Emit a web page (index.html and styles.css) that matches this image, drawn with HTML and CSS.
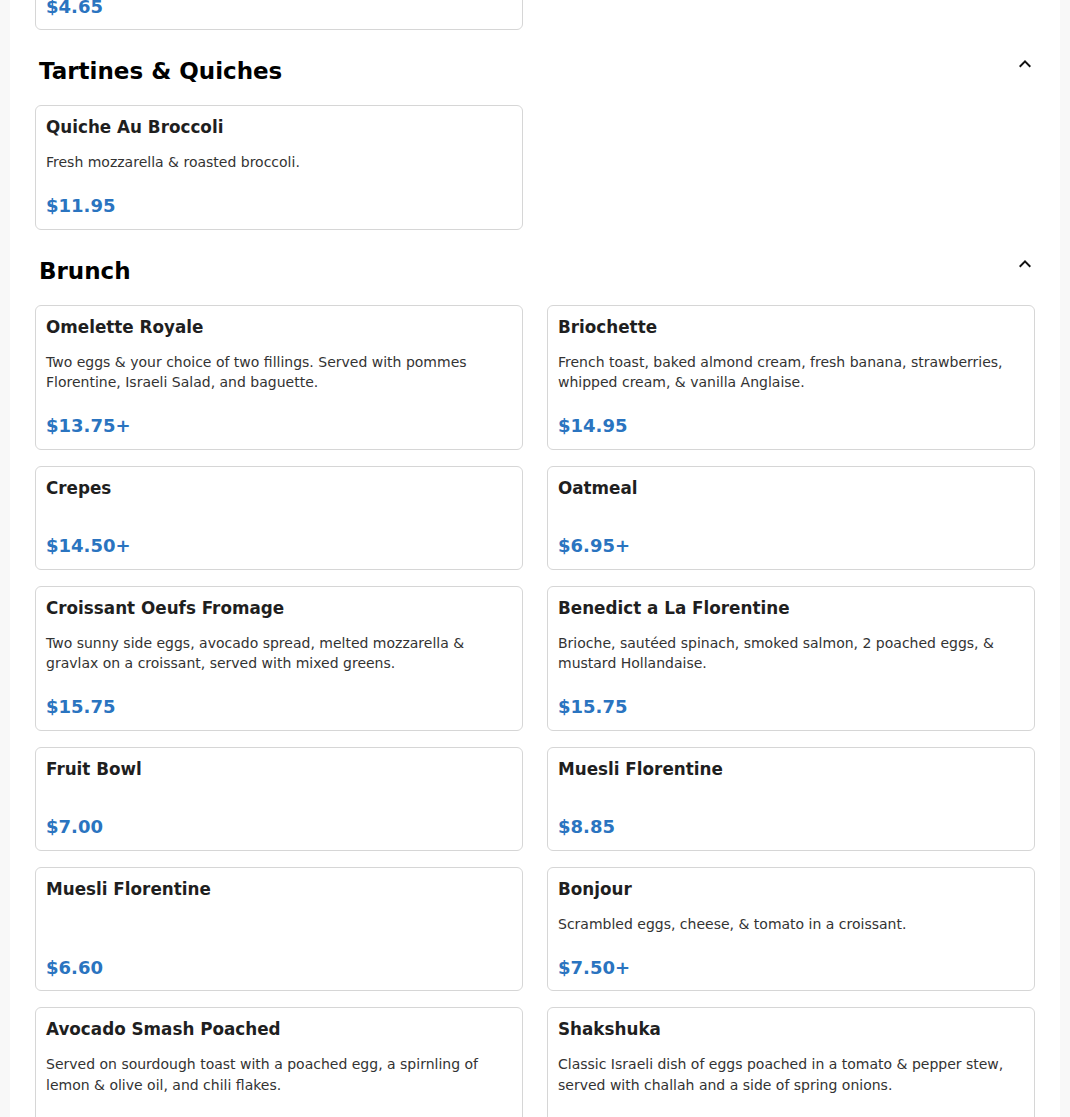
FILE: index.html
```html
<!DOCTYPE html>
<html lang="en">
<head>
<meta charset="utf-8">
<title>Menu</title>
<link rel="stylesheet" href="styles.css">
</head>
<body>
<main class="menu">
  <div class="grid grid-top">
    <div class="card card-cut">
      <div class="price">$4.65</div>
    </div>
  </div>

  <section class="section">
    <div class="section-head">
      <h2 class="section-title">Tartines &amp; Quiches</h2>
      <button class="toggle" aria-label="Collapse">
        <svg viewBox="0 0 24 24" width="24" height="24"><path d="M12 8l-6 6 1.41 1.41L12 10.83l4.59 4.58L18 14z"/></svg>
      </button>
    </div>
    <div class="grid">
      <div class="card">
        <h3 class="item-name">Quiche Au Broccoli</h3>
        <p class="item-desc">Fresh mozzarella &amp; roasted broccoli.</p>
        <div class="price">$11.95</div>
      </div>
    </div>
  </section>

  <section class="section">
    <div class="section-head">
      <h2 class="section-title">Brunch</h2>
      <button class="toggle" aria-label="Collapse">
        <svg viewBox="0 0 24 24" width="24" height="24"><path d="M12 8l-6 6 1.41 1.41L12 10.83l4.59 4.58L18 14z"/></svg>
      </button>
    </div>
    <div class="grid">
      <div class="card">
        <h3 class="item-name">Omelette Royale</h3>
        <p class="item-desc">Two eggs &amp; your choice of two fillings. Served with pommes Florentine, Israeli Salad, and baguette.</p>
        <div class="price">$13.75+</div>
      </div>
      <div class="card">
        <h3 class="item-name">Briochette</h3>
        <p class="item-desc">French toast, baked almond cream, fresh banana, strawberries, whipped cream, &amp; vanilla Anglaise.</p>
        <div class="price">$14.95</div>
      </div>
      <div class="card">
        <h3 class="item-name">Crepes</h3>
        <p class="item-desc"></p>
        <div class="price">$14.50+</div>
      </div>
      <div class="card">
        <h3 class="item-name">Oatmeal</h3>
        <p class="item-desc"></p>
        <div class="price">$6.95+</div>
      </div>
      <div class="card">
        <h3 class="item-name">Croissant Oeufs Fromage</h3>
        <p class="item-desc">Two sunny side eggs, avocado spread, melted mozzarella &amp; gravlax on a croissant, served with mixed greens.</p>
        <div class="price">$15.75</div>
      </div>
      <div class="card">
        <h3 class="item-name">Benedict a La Florentine</h3>
        <p class="item-desc">Brioche, sautéed spinach, smoked salmon, 2 poached eggs, &amp; mustard Hollandaise.</p>
        <div class="price">$15.75</div>
      </div>
      <div class="card">
        <h3 class="item-name">Fruit Bowl</h3>
        <p class="item-desc"></p>
        <div class="price">$7.00</div>
      </div>
      <div class="card">
        <h3 class="item-name">Muesli Florentine</h3>
        <p class="item-desc"></p>
        <div class="price">$8.85</div>
      </div>
      <div class="card">
        <h3 class="item-name">Muesli Florentine</h3>
        <p class="item-desc">&nbsp;</p>
        <div class="price">$6.60</div>
      </div>
      <div class="card">
        <h3 class="item-name">Bonjour</h3>
        <p class="item-desc">Scrambled eggs, cheese, &amp; tomato in a croissant.</p>
        <div class="price">$7.50+</div>
      </div>
      <div class="card">
        <h3 class="item-name">Avocado Smash Poached</h3>
        <p class="item-desc">Served on sourdough toast with a poached egg, a spirnling of lemon &amp; olive oil, and chili flakes.</p>
        <div class="price">$12.50</div>
      </div>
      <div class="card">
        <h3 class="item-name">Shakshuka</h3>
        <p class="item-desc">Classic Israeli dish of eggs poached in a tomato &amp; pepper stew, served with challah and a side of spring onions.</p>
        <div class="price">$14.95</div>
      </div>
    </div>
  </section>
</main>
</body>
</html>
```
FILE: styles.css
```css
html, body {
  margin: 0;
  padding: 0;
}
body {
  background: #f8f8f8;
  font-family: "DejaVu Sans", Verdana, sans-serif;
  color: #222;
}
.menu {
  max-width: 1050px;
  margin: 0 auto;
  background: #ffffff;
  padding: 0 25px 40px;
  box-sizing: border-box;
  min-height: 1200px;
}
.grid {
  display: grid;
  grid-template-columns: 1fr 1fr;
  column-gap: 24px;
  row-gap: 16px;
}
.grid-top {
  margin-top: -17.5px;
}
.card {
  display: flex;
  flex-direction: column;
  border: 1px solid #d6d6d6;
  border-radius: 6px;
  padding: 9px 10px 9.5px;
  background: #fff;
}
.item-name {
  margin: 0 0 12px;
  font-size: 16.8px;
  line-height: 25px;
  font-weight: bold;
  color: #1f1f1f;
}
.item-desc {
  margin: 0 0 19.5px;
  font-size: 14px;
  line-height: 20.5px;
  color: #333;
}
.price {
  font-size: 18px;
  line-height: 27px;
  font-weight: bold;
  color: #2a74c0;
}
.section {
  margin-top: 24px;
}
.section-head {
  display: flex;
  justify-content: space-between;
  align-items: flex-start;
  padding-left: 4px;
  margin-bottom: 16px;
}
.section-title {
  margin: 0;
  font-size: 23px;
  line-height: 35px;
  font-weight: bold;
  color: #000;
}
.toggle {
  border: 0;
  background: none;
  padding: 0;
  margin: -2px -2px 0 0;
  width: 24px;
  height: 24px;
  cursor: pointer;
}
.toggle svg {
  display: block;
  fill: #111;
}
```
